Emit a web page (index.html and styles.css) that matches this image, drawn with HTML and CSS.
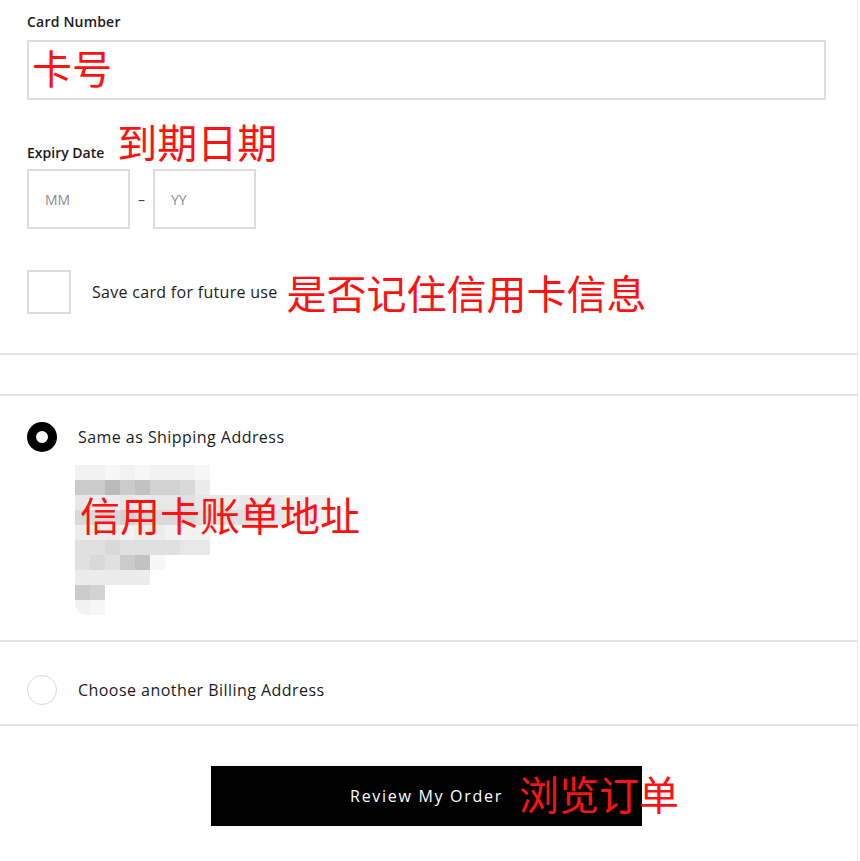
FILE: index.html
```html
<!DOCTYPE html>
<html lang="en">

<head>
    <meta charset="UTF-8">
    <meta name="viewport" content="width=device-width, initial-scale=1.0">
    <title>payment</title>
    <link rel="stylesheet" href="styles.css">
</head>

<body>
    <div class="checkout">
        <!-- 卡片信息 -->
        <section class="card-form">
            <div class="field-label">Card Number</div>
            <div class="text-input card-input"><span class="note">卡号</span></div>

            <div class="expiry-head">
                <span class="field-label small">Expiry Date</span>
                <span class="note">到期日期</span>
            </div>
            <div class="expiry-row">
                <div class="text-input date">MM</div>
                <span class="dash">–</span>
                <div class="text-input date">YY</div>
            </div>

            <div class="save-row">
                <span class="checkbox"></span>
                <span class="save-text">Save card for future use</span>
                <span class="note">是否记住信用卡信息</span>
            </div>
        </section>

        <div class="spacer"></div>

        <!-- 账单地址 -->
        <section class="billing-option first">
            <div class="radio-row">
                <span class="radio checked"></span>
                <span class="radio-text">Same as Shipping Address</span>
            </div>
            <div class="address">
                <div class="mosaic">
                    <div class="m-row"><i class="g9"></i><i class="g9"></i><i class="g10"></i><i class="g9"></i><i class="g10"></i><i class="g9"></i><i class="g9"></i><i class="g9"></i><i class="g10"></i></div>
                    <div class="m-row"><i class="g3"></i><i class="g3"></i><i class="g1"></i><i class="g3"></i><i class="g2"></i><i class="g4"></i><i class="g4"></i><i class="g5"></i><i class="g8"></i></div>
                    <div class="m-row"><i class="g7"></i><i class="g8"></i><i class="g8"></i><i class="g7"></i><i class="g8"></i><i class="g7"></i><i class="g7"></i><i class="g6"></i><i class="g7"></i><i class="g7"></i><i class="g8"></i><i class="g7"></i><i class="g8"></i><i class="g8"></i><i class="g9"></i><i class="g9"></i><i class="g9"></i></div>
                    <div class="m-row"><i class="g5"></i><i class="g5"></i><i class="g5"></i><i class="g4"></i><i class="g5"></i><i class="g5"></i><i class="g5"></i><i class="g5"></i><i class="g6"></i><i class="g6"></i><i class="g6"></i><i class="g6"></i><i class="g7"></i><i class="g7"></i><i class="g8"></i><i class="g8"></i><i class="g9"></i></div>
                    <div class="m-row"><i class="g8"></i><i class="g8"></i><i class="g8"></i><i class="g9"></i><i class="g8"></i><i class="g8"></i><i class="g9"></i><i class="g9"></i><i class="g9"></i></div>
                    <div class="m-row"><i class="g6"></i><i class="g6"></i><i class="g5"></i><i class="g6"></i><i class="g6"></i><i class="g6"></i><i class="g6"></i><i class="g7"></i><i class="g7"></i></div>
                    <div class="m-row"><i class="g6"></i><i class="g5"></i><i class="g6"></i><i class="g3"></i><i class="g2"></i><i class="g10"></i></div>
                    <div class="m-row"><i class="g8"></i><i class="g8"></i><i class="g8"></i><i class="g8"></i><i class="g8"></i></div>
                    <div class="m-row"><i class="g3"></i><i class="g4"></i></div>
                    <div class="m-row last"><i class="g9"></i><i class="g10"></i></div>
                </div>
                <span class="note address-note">信用卡账单地址</span>
            </div>
        </section>

        <section class="billing-option">
            <div class="radio-row">
                <span class="radio"></span>
                <span class="radio-text">Choose another Billing Address</span>
            </div>
        </section>

        <div class="actions">
            <div class="review-btn">
                Review My Order
                <span class="note btn-note">浏览订单</span>
            </div>
        </div>
    </div>
</body>

</html>
```

FILE: styles.css
```css
* {
    margin: 0px;
    padding: 0px;
    box-sizing: border-box;
}

body {
    font-family: "Open Sans", "Noto Sans", sans-serif;
    color: #1b1b1b;
    background: #fff;
}

.checkout {
    width: 858px;
    min-height: 861px;
    border-right: 1px solid #e9e9e9;
}

/* 红色批注 */
.note {
    font-family: "Noto Sans CJK SC", sans-serif;
    font-size: 40px;
    line-height: 48px;
    color: #ff1111;
    white-space: nowrap;
    letter-spacing: 0;
}

.card-form {
    padding: 12px 31px 37px 27px;
    border-bottom: 2px solid #e3e3e3;
}

.field-label {
    font-size: 14px;
    font-weight: 600;
    letter-spacing: 0.2px;
    line-height: 20px;
    margin-bottom: 8px;
}

.field-label.small {
    font-size: 14px;
    letter-spacing: 0;
    margin: 0;
}

.text-input {
    height: 60px;
    border: 2px solid #dddddd;
    display: flex;
    align-items: center;
}

.card-input {
    padding: 1px 0 0 3px;
    align-items: flex-start;
}

.expiry-head {
    margin-top: 17px;
    display: flex;
    align-items: baseline;
    gap: 13px;
}

.expiry-row {
    margin-top: 4px;
    display: flex;
    align-items: center;
}

.text-input.date {
    width: 103px;
    padding-left: 16px;
    font-size: 14px;
    color: #8c8c8c;
}

.dash {
    width: 23px;
    text-align: center;
    font-size: 14px;
    color: #444;
}

.save-row {
    margin-top: 39px;
    height: 48px;
    display: flex;
    align-items: center;
}

.checkbox {
    width: 44px;
    height: 44px;
    border: 2px solid #dddddd;
}

.save-text {
    margin-left: 21px;
    margin-right: 9px;
    font-size: 16px;
    letter-spacing: 0.3px;
}

.spacer {
    height: 41px;
    border-bottom: 2px solid #e3e3e3;
}

.billing-option {
    padding: 33px 27px 19px;
    border-bottom: 2px solid #e3e3e3;
}

.billing-option.first {
    padding-top: 26px;
    padding-bottom: 25px;
}

.radio-row {
    display: flex;
    align-items: center;
    height: 30px;
}

.radio {
    width: 30px;
    height: 30px;
    border-radius: 50%;
    border: 1.5px solid #d9d9d9;
}

.radio.checked {
    border: 9px solid #000;
}

.radio-text {
    margin-left: 21px;
    font-size: 16px;
    letter-spacing: 0.45px;
}

.address {
    position: relative;
    margin: 13px 0 0 48px;
    height: 150px;
}

.m-row {
    display: flex;
    height: 15px;
}

.m-row i {
    width: 15px;
    height: 15px;
}

.m-row.last i:first-child {
    border-bottom-left-radius: 12px;
}

.g1 { background: #bababa; }
.g2 { background: #c2c2c2; }
.g3 { background: #cbcbcb; }
.g4 { background: #d2d2d2; }
.g5 { background: #d9d9d9; }
.g6 { background: #e0e0e0; }
.g7 { background: #e7e7e7; }
.g8 { background: #ececec; }
.g9 { background: #f2f2f2; }
.g10 { background: #f7f7f7; }

.address-note {
    position: absolute;
    left: 5px;
    top: 25px;
}

.actions {
    padding: 40px 0 0 211px;
}

.review-btn {
    position: relative;
    width: 431px;
    height: 60px;
    background: #000;
    color: #fff;
    font-size: 16px;
    letter-spacing: 1.7px;
    display: flex;
    align-items: center;
    justify-content: center;
}

.btn-note {
    position: absolute;
    left: 308px;
    top: 3px;
}
```
